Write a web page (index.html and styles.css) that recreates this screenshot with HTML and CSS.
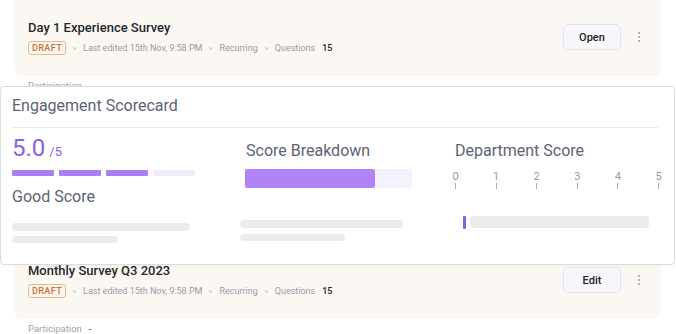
FILE: index.html
```html
<!DOCTYPE html>
<html lang="en">
<head>
<meta charset="utf-8">
<title>Surveys</title>
<link rel="stylesheet" href="styles.css">
</head>
<body>
<div class="page">
  <div class="list">
    <div class="item item-first">
      <div class="card">
        <div class="card-main">
          <div class="card-title">Day 1 Experience Survey</div>
          <div class="meta">
            <span class="badge">DRAFT</span>
            <span class="dot"></span>
            <span class="meta-text">Last edited 15th Nov, 9:58 PM</span>
            <span class="dot"></span>
            <span class="meta-text">Recurring</span>
            <span class="dot"></span>
            <span class="meta-text">Questions</span>
            <span class="meta-num">15</span>
          </div>
        </div>
        <div class="card-actions">
          <button class="btn">Open</button>
          <span class="kebab"><i></i><i></i><i></i></span>
        </div>
      </div>
      <div class="participation"><span class="p-label">Participation</span><span class="p-val">-</span></div>
    </div>
    <div class="item">
      <div class="card">
        <div class="card-main">
          <div class="card-title">Monthly Survey Q3 2023</div>
          <div class="meta">
            <span class="badge">DRAFT</span>
            <span class="dot"></span>
            <span class="meta-text">Last edited 15th Nov, 9:58 PM</span>
            <span class="dot"></span>
            <span class="meta-text">Recurring</span>
            <span class="dot"></span>
            <span class="meta-text">Questions</span>
            <span class="meta-num">15</span>
          </div>
        </div>
        <div class="card-actions">
          <button class="btn">Edit</button>
          <span class="kebab"><i></i><i></i><i></i></span>
        </div>
      </div>
      <div class="participation"><span class="p-label">Participation</span><span class="p-val">-</span></div>
    </div>
  </div>

  <div class="scorecard">
    <div class="sc-title">Engagement Scorecard</div>
    <div class="sc-divider"></div>
    <div class="sc-cols">
      <div class="col col-score">
        <div class="score"><span class="score-big">5.0</span><span class="score-small">/5</span></div>
        <div class="segments"><span class="seg on"></span><span class="seg on"></span><span class="seg on"></span><span class="seg"></span></div>
        <div class="col-heading good">Good Score</div>
        <div class="skel skel-a"></div>
        <div class="skel skel-b"></div>
      </div>
      <div class="col col-breakdown">
        <div class="col-heading">Score Breakdown</div>
        <div class="bd-bar"><div class="bd-fill" style="width:78%"></div></div>
        <div class="skel skel-c"></div>
        <div class="skel skel-d"></div>
      </div>
      <div class="col col-dept">
        <div class="col-heading">Department Score</div>
        <div class="axis">
          <div class="tick"><span>0</span><i></i></div>
          <div class="tick"><span>1</span><i></i></div>
          <div class="tick"><span>2</span><i></i></div>
          <div class="tick"><span>3</span><i></i></div>
          <div class="tick"><span>4</span><i></i></div>
          <div class="tick"><span>5</span><i></i></div>
        </div>
        <div class="dept-row"><span class="dept-mark"></span><span class="dept-bar"></span></div>
      </div>
    </div>
  </div>
</div>
</body>
</html>
```

FILE: styles.css
```css
* { box-sizing: border-box; }
html, body { margin: 0; padding: 0; background: #ffffff; }
body { font-family: Roboto, "Noto Sans", sans-serif; }
.page { position: relative; width: 676px; height: 334px; overflow: hidden; }

.list { margin-top: -12px; padding: 0 15px 0 14px; }
.item-first { margin-bottom: 139px; }

.card {
  background: #fbf8f3;
  border-radius: 8px;
  padding: 31px 20px 21px 14px;
  display: flex;
  align-items: center;
  justify-content: space-between;
}
.card-title {
  font-size: 13px;
  line-height: 18px;
  font-weight: 500;
  color: #26272b;
}
.meta { display: flex; align-items: center; gap: 7px; margin-top: 4px; height: 14px; }
.badge {
  font-size: 9px;
  line-height: 11px;
  font-weight: 500;
  letter-spacing: 0.4px;
  color: #c4753a;
  background: #fdf4ec;
  border: 1px solid #e9b78f;
  border-radius: 3px;
  padding: 1px 3px;
  height: 14px;
}
.dot { width: 3px; height: 3px; border-radius: 50%; background: #d4d4da; }
.meta-text { font-size: 9px; line-height: 12px; color: #9a9aa8; }
.meta-num { font-size: 9px; line-height: 12px; font-weight: 500; color: #26272b; }

.card-actions { display: flex; align-items: center; gap: 17px; margin-top: 0; }
.btn {
  width: 58px; height: 26px;
  background: #f8f8fc;
  border: 1px solid #e4e4ee;
  border-radius: 5px;
  font-family: Roboto, sans-serif;
  font-size: 11px;
  font-weight: 500;
  color: #222;
  padding: 0;
}
.kebab { display: flex; flex-direction: column; gap: 2px; width: 3px; }
.kebab i { display: block; width: 2px; height: 2px; border-radius: 50%; background: #9a9aa4; }

.participation { padding: 4px 0 0 14px; font-size: 9.5px; line-height: 12px; display: flex; gap: 7px; }
.p-label { color: #a2a2ae; }
.p-val { color: #333; }

/* overlay scorecard */
.scorecard {
  position: absolute;
  left: 0; top: 86px;
  width: 675px; height: 179px;
  background: #fff;
  border: 1px solid #dcdcdf;
  border-radius: 4px;
  box-shadow: 0 1px 3px rgba(0,0,0,0.04);
  padding: 9px 16px 0 11px;
}
.sc-title { font-size: 16px; line-height: 20px; color: #5d6374; }
.sc-divider { height: 1px; background: #e8e8ea; margin-top: 11px; }
.sc-cols { display: grid; grid-template-columns: 228px 214px 205px; }
.col { display: flex; flex-direction: column; }
.col-heading { font-size: 16px; line-height: 20px; color: #5d6374; }

.col-score { padding-top: 7px; }
.score { display: flex; align-items: baseline; gap: 4px; height: 26px; line-height: 26px; color: #8b5fe8; }
.score-big { font-size: 24px; }
.score-small { font-size: 13px; }
.segments { display: flex; gap: 5px; margin-top: 9px; }
.seg { width: 42px; height: 6px; border-radius: 1px; background: #efebfd; }
.seg.on { background: #a97ff3; }
.good { margin-top: 11px; }
.skel { background: #ececec; border-radius: 4px; }
.skel-a { width: 178px; height: 8px; margin-top: 16px; }
.skel-b { width: 106px; height: 7px; margin-top: 5px; }

.col-breakdown { padding-top: 13px; }
.col-breakdown .col-heading { padding-left: 6px; }
.bd-bar { margin-left: 5px; width: 167px; height: 19px; background: #f5f2fe; border-radius: 2px; }
.bd-fill { height: 100%; background: #b083f6; border-radius: 2px; }
.col-breakdown .bd-bar { margin-top: 8px; }
.skel-c { width: 163px; height: 8px; margin-top: 32px; }
.skel-d { width: 105px; height: 7px; margin-top: 6px; }

.col-dept { padding-top: 13px; padding-left: 1px; }
.axis { display: flex; justify-content: space-between; margin: 9px -4px 0 -4px; }
.tick { width: 9px; display: flex; flex-direction: column; align-items: center; }
.tick span { font-size: 11px; line-height: 13px; color: #9a9aa2; }
.tick i { display: block; width: 1px; height: 6px; background: #a9a9ae; margin-top: 0; }
.dept-row { display: flex; align-items: flex-start; gap: 4px; margin-top: 27px; margin-left: 8px; }
.dept-mark { width: 3px; height: 13px; background: #8b5fe8; border-radius: 1px; }
.dept-bar { width: 179px; height: 12px; background: #ececec; border-radius: 4px; }
```
